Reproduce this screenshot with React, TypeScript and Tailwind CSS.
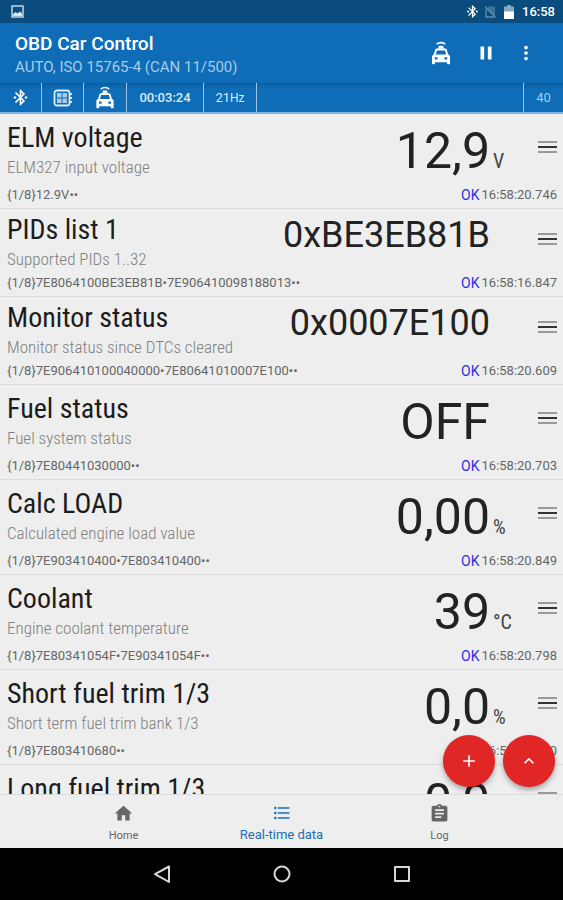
import type { ReactNode } from 'react';
import {
  MdAdd,
  MdAssignment,
  MdBluetoothConnected,
  MdFormatListBulleted,
  MdHome,
  MdKeyboardArrowUp,
  MdMoreVert,
  MdPause,
} from 'react-icons/md';

interface Reading {
  name: string;
  description: string;
  raw: string;
  value: string;
  unit?: string;
  time: string;
  compact?: boolean;
}

const readings: Reading[] = [
  { name: 'ELM voltage', description: 'ELM327 input voltage', raw: '{1/8}12.9V••', value: '12,9', unit: 'V', time: '16:58:20.746' },
  { name: 'PIDs list 1', description: 'Supported PIDs 1..32', raw: '{1/8}7E8064100BE3EB81B•7E906410098188013••', value: '0xBE3EB81B', time: '16:58:16.847', compact: true },
  { name: 'Monitor status', description: 'Monitor status since DTCs cleared', raw: '{1/8}7E906410100040000•7E80641010007E100••', value: '0x0007E100', time: '16:58:20.609', compact: true },
  { name: 'Fuel status', description: 'Fuel system status', raw: '{1/8}7E80441030000••', value: 'OFF', time: '16:58:20.703' },
  { name: 'Calc LOAD', description: 'Calculated engine load value', raw: '{1/8}7E903410400•7E803410400••', value: '0,00', unit: '%', time: '16:58:20.849' },
  { name: 'Coolant', description: 'Engine coolant temperature', raw: '{1/8}7E80341054F•7E90341054F••', value: '39', unit: '°C', time: '16:58:20.798' },
  { name: 'Short fuel trim 1/3', description: 'Short term fuel trim bank 1/3', raw: '{1/8}7E803410680••', value: '0,0', unit: '%', time: '16:58:20.840' },
  { name: 'Long fuel trim 1/3', description: '', raw: '', value: '0,0', time: '' },
];

function CarIcon({ className }: { className: string }) {
  return (
    <svg viewBox="0 0 20 24" className={className} fill="currentColor" aria-hidden="true">
      <path
        fillRule="evenodd"
        d="M5.500 7.500h9c.6 0 1 .4 1.200.9l1.200 4c.2.500.3.800.7 1.200L19 15.200v7.300c0 .4-.3.700-.7.700h-1.600c-.4 0-.7-.3-.7-.7v-1.300H4v1.300c0 .4-.3.700-.7.700H1.700c-.4 0-.7-.3-.7-.7v-7.300l1.400-1.600c.4-.4.5-.7.7-1.200l1.200-4c.2-.5.600-.9 1.200-.9ZM6 9.500l-1.200 4h10.400l-1.200-4H6ZM3.800 16.300v2.200h2.700v-2.200Zm9.700 0v2.200h2.700v-2.200Z"
      />
      <path d="M8 4.800h4l1 3H7z" />
      <path d="M5.700 3.300C7.800 1 12.200 1 14.300 3.300" fill="none" stroke="currentColor" strokeWidth="1.700" />
    </svg>
  );
}

function ChipIcon() {
  return (
    <svg viewBox="0 0 20 18" className="h-[18px] w-5" fill="none" stroke="currentColor" aria-hidden="true">
      <rect x="1.500" y="1.500" width="15" height="15" rx="2.500" strokeWidth="1.800" />
      <path d="M17 5h2M17 9h2M17 13h2" strokeWidth="2" />
      <path d="M4 4h10v10H4z" fill="currentColor" fillOpacity=".75" stroke="none" />
      <path d="M9 4v10M4 9h10" stroke="#0f6db7" strokeWidth="1" />
    </svg>
  );
}

function StatusBar() {
  return (
    <div className="flex h-[23px] shrink-0 items-center justify-between bg-[#0a4c7d] pr-2 pl-[11px] text-white">
      <svg viewBox="0 0 13 13" className="size-[13px]" aria-hidden="true">
        <rect x="1" y="1" width="11" height="11" fill="none" stroke="#c3d4e1" strokeWidth="1.500" />
        <path d="M2 11V9l2.500-2 2 1.500L9 6.500l2 2V11z" fill="#dbe6ee" />
      </svg>
      <div className="flex items-center gap-1">
        <MdBluetoothConnected className="size-[15px]" />
        <svg viewBox="0 0 12 13" className="mr-1 h-[13px] w-3 text-[#5f8cae]" aria-hidden="true">
          <path d="M4.500 1.500h6.500v10.500L3 4Z" fill="currentColor" opacity=".6" />
          <path d="M2 4v8h8M1 1.500l10.500 11" fill="none" stroke="currentColor" strokeWidth="1.300" />
        </svg>
        <svg viewBox="0 0 10 14" className="h-[14px] w-2.500" aria-hidden="true">
          <path d="M3 0h4v1.500h3V8H0V1.500h3z" fill="#86a7c0" />
          <path d="M0 6.500h10V14H0z" fill="#fff" />
        </svg>
        <span className="ml-1 text-[13px] leading-4 font-medium">16:58</span>
      </div>
    </div>
  );
}

function AppBar() {
  return (
    <header className="flex h-[60px] shrink-0 items-center bg-[#0f6db7] pr-[26px] pl-[15px] text-white">
      <div className="min-w-0 flex-1 pt-1">
        <h1 className="truncate text-[19px] leading-6 font-medium">OBD Car Control</h1>
        <p className="truncate text-[15px] leading-[22px] text-[#a9cbe7]">AUTO, ISO 15765-4 (CAN 11/500)</p>
      </div>
      <div className="flex items-center">
        <button type="button" aria-label="Vehicle" className="mr-6">
          <CarIcon className="h-6 w-5" />
        </button>
        <button type="button" aria-label="Pause" className="mr-[18px]">
          <MdPause className="size-[22px]" />
        </button>
        <button type="button" aria-label="More options">
          <MdMoreVert className="size-[22px]" />
        </button>
      </div>
    </header>
  );
}

function Cell({ className, children }: { className: string; children: ReactNode }) {
  return (
    <div className={`flex items-center justify-center border-[#9cc4e6] ${className}`}>{children}</div>
  );
}

function ConnectionBar() {
  return (
    <div className="flex h-[31px] shrink-0 border-b-2 border-[#7fb5e2] bg-linear-to-b from-[#0d5c9c] from-0% to-[#0f6db7] to-20% text-[13px] text-[#dcebf7]">
      <Cell className="w-[42px] border-r">
        <MdBluetoothConnected className="size-[19px] text-white" />
      </Cell>
      <Cell className="w-[42px] border-r">
        <ChipIcon />
      </Cell>
      <Cell className="w-[43px] border-r">
        <CarIcon className="h-[23px] w-5 text-white" />
      </Cell>
      <Cell className="w-[77px] border-r font-medium">00:03:24</Cell>
      <Cell className="w-[53px] border-r">
        <span className="text-[13px]">21</span>
        <span className="text-[12px]">Hz</span>
      </Cell>
      <Cell className="ml-auto w-10 border-l text-[#a9cbe7]">40</Cell>
    </div>
  );
}

function ReadingRow({ reading }: { reading: Reading }) {
  const { name, description, raw, value, unit, time, compact } = reading;

  return (
    <li
      className={`flex shrink-0 flex-col justify-between border-b border-[#dcdcdc] pr-[6px] pb-[5px] pl-[7px] ${
        compact ? 'h-[88px] pt-1' : 'h-[95px] pt-[7px]'
      }`}
    >
      <div className="flex items-start">
        <div className="min-w-0 flex-1 font-['Roboto_Condensed',Roboto,sans-serif]">
          <h2 className="text-[28px] leading-[34px] whitespace-nowrap text-[#1c1c1c]">{name}</h2>
          <p className="text-[17px] leading-6 font-light whitespace-nowrap text-[#808080]">{description}</p>
        </div>
        <div className="flex items-baseline text-[#222]">
          <span className={compact ? 'text-[36px] leading-[44px]' : 'text-[50px] leading-[60px]'}>{value}</span>
          <span className="w-12 pl-[3px] font-['Roboto_Condensed',Roboto,sans-serif] text-[20px] text-[#444]">{unit}</span>
        </div>
        <button type="button" aria-label={`Move ${name}`} className="mt-[20px] flex w-[19px] flex-col gap-[3px]">
          <span className="h-[2px] w-full bg-[#999]" />
          <span className="h-[2px] w-full bg-[#333]" />
          <span className="h-[2px] w-full bg-[#999]" />
        </button>
      </div>
      <div className="flex justify-between text-[13px] leading-4 text-[#666]">
        <span>{raw}</span>
        {time && (
          <span className="flex gap-[2px]">
            <span className="text-[14px] text-[#2f2fe8]">OK</span>
            {time}
          </span>
        )}
      </div>
    </li>
  );
}

function Fab({ label, children }: { label: string; children: ReactNode }) {
  return (
    <button
      type="button"
      aria-label={label}
      className="flex size-[52px] items-center justify-center rounded-full bg-[#e12626] text-white shadow-[0_3px_5px_rgba(0,0,0,0.3)]"
    >
      {children}
    </button>
  );
}

function BottomTabs() {
  return (
    <nav className="flex h-[54px] shrink-0 justify-center border-t border-[#dcdcdc] bg-[#eeeeee] leading-4 text-[#666]">
      <a href="#home" className="flex w-[158px] flex-col items-center pt-2 text-[11px]">
        <MdHome className="mb-1 size-[21px]" />
        Home
      </a>
      <a href="#data" className="flex w-[158px] flex-col items-center pt-2 text-[13px] text-[#1a6fb8]">
        <MdFormatListBulleted className="mb-1 size-5" />
        Real-time data
      </a>
      <a href="#log" className="flex w-[158px] flex-col items-center pt-2 text-[11px]">
        <MdAssignment className="mb-1 size-[21px]" />
        Log
      </a>
    </nav>
  );
}

function SystemNav() {
  return (
    <div className="flex h-[52px] shrink-0 items-center justify-center gap-[98px] bg-black text-[#d8d8d8]">
      <button type="button" aria-label="Back">
        <svg viewBox="0 0 22 22" className="size-[22px]" fill="none" stroke="currentColor" strokeWidth="2" strokeLinejoin="round">
          <path d="M18 3.500v15.500L4 11.200Z" />
        </svg>
      </button>
      <button type="button" aria-label="Home screen">
        <svg viewBox="0 0 22 22" className="size-[22px]" fill="none" stroke="currentColor" strokeWidth="2">
          <circle cx="11" cy="11" r="7.500" />
        </svg>
      </button>
      <button type="button" aria-label="Recent apps">
        <svg viewBox="0 0 22 22" className="size-[22px]" fill="none" stroke="currentColor" strokeWidth="2" strokeLinejoin="round">
          <rect x="4" y="4" width="14" height="14" />
        </svg>
      </button>
    </div>
  );
}

export default function App() {
  return (
    <div className="flex h-screen flex-col bg-[#eeeeee] font-[Roboto,sans-serif]">
      <StatusBar />
      <AppBar />
      <ConnectionBar />
      <main className="relative min-h-0 flex-1 overflow-hidden">
        <ul className="flex flex-col">
          {readings.map((reading) => (
            <ReadingRow key={reading.name} reading={reading} />
          ))}
        </ul>
        <div className="absolute right-2 bottom-[7px] flex gap-2">
          <Fab label="Add">
            <MdAdd className="size-5" />
          </Fab>
          <Fab label="Scroll up">
            <MdKeyboardArrowUp className="size-5" />
          </Fab>
        </div>
      </main>
      <BottomTabs />
      <SystemNav />
    </div>
  );
}
